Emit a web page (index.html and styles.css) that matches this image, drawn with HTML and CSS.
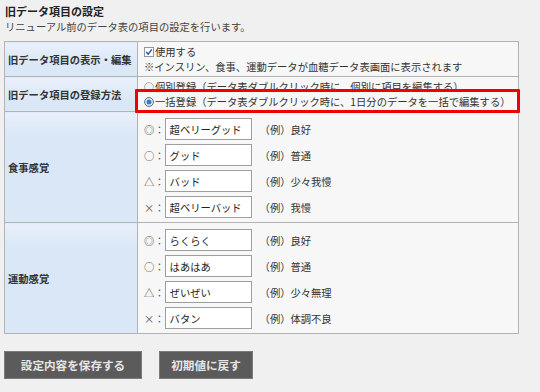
FILE: index.html
```html
<!DOCTYPE html>
<html lang="ja">
<head>
<meta charset="utf-8">
<link rel="stylesheet" href="styles.css">
</head>
<body>
<div class="page">
  <h1 class="title">旧データ項目の設定</h1>
  <p class="lead">リニューアル前のデータ表の項目の設定を行います。</p>
  <table class="settings">
    <tr class="r1">
      <th>旧データ項目の表示・編集</th>
      <td>
        <div class="line"><svg class="chk" width="10" height="10" viewBox="0 0 10 10"><rect x="0.5" y="0.5" width="9" height="9" fill="#fff" stroke="#8c9ab0"/><path d="M2.2 5.0 L4.2 7.2 L7.9 2.4" fill="none" stroke="#2b4fa0" stroke-width="1.4"/></svg>使用する</div>
        <div class="line">※インスリン、食事、運動データが血糖データ表画面に表示されます</div>
      </td>
    </tr>
    <tr class="r2">
      <th>旧データ項目の登録方法</th>
      <td>
        <div class="rline"><svg class="rad" width="10" height="10" viewBox="0 0 10 10"><circle cx="5" cy="5" r="4.4" fill="#f4f4f4" stroke="#a8a8a8" stroke-width="0.9"/></svg>個別登録（データ表ダブルクリック時に、個別に項目を編集する）</div>
        <div class="rline marked"><svg class="rad" width="10" height="10" viewBox="0 0 10 10"><circle cx="5" cy="5" r="4.4" fill="#e9eef4" stroke="#4d5a6a" stroke-width="0.9"/><circle cx="5" cy="5" r="2.5" fill="#2f7fd0"/></svg>一括登録（データ表ダブルクリック時に、1日分のデータを一括で編集する）</div>
      </td>
    </tr>
    <tr class="r3">
      <th>食事感覚</th>
      <td>
        <div class="opt"><span class="sym">◎：</span><input class="field" type="text" value="超ベリーグッド"><span class="ex">（例）良好</span></div>
        <div class="opt"><span class="sym">○：</span><input class="field" type="text" value="グッド"><span class="ex">（例）普通</span></div>
        <div class="opt"><span class="sym">△：</span><input class="field" type="text" value="バッド"><span class="ex">（例）少々我慢</span></div>
        <div class="opt"><span class="sym">×：</span><input class="field" type="text" value="超ベリーバッド"><span class="ex">（例）我慢</span></div>
      </td>
    </tr>
    <tr class="r4">
      <th>運動感覚</th>
      <td>
        <div class="opt"><span class="sym">◎：</span><input class="field" type="text" value="らくらく"><span class="ex">（例）良好</span></div>
        <div class="opt"><span class="sym">○：</span><input class="field" type="text" value="はあはあ"><span class="ex">（例）普通</span></div>
        <div class="opt"><span class="sym">△：</span><input class="field" type="text" value="ぜいぜい"><span class="ex">（例）少々無理</span></div>
        <div class="opt"><span class="sym">×：</span><input class="field" type="text" value="バタン"><span class="ex">（例）体調不良</span></div>
      </td>
    </tr>
  </table>
  <div class="actions">
    <button class="btn btn-save" type="button">設定内容を保存する</button>
    <button class="btn btn-reset" type="button">初期値に戻す</button>
  </div>
</div>
</body>
</html>
```

FILE: styles.css
```css
html, body {
  margin: 0;
  padding: 0;
  background: #f0f0f0;
}
body {
  font-family: "Noto Sans CJK JP", "Noto Sans", sans-serif;
  font-size: 10.3px;
  color: #333;
}
.page {
  padding: 3px 4px 0 4px;
}
.title {
  margin: 0 0 0 1px;
  font-size: 11px;
  line-height: 16px;
  font-weight: bold;
  color: #222;
}
.lead {
  margin: 0 0 0 1px;
  line-height: 15px;
  color: #444;
}
.settings {
  margin-top: 7px;
  width: 515px;
  border-collapse: collapse;
  border: 1px solid #a6a6a6;
}
.settings th,
.settings td {
  border: 1px solid #b3b3b3;
  vertical-align: middle;
}
.settings th {
  width: 124px;
  padding: 0 5px 0 3px;
  text-align: left;
  font-weight: bold;
  color: #333;
  white-space: nowrap;
  background: linear-gradient(#e8f0fa, #dae7f7 24px, #dae7f7);
}
.settings td {
  background: #f7f7f7;
  padding: 0 4px 0 6px;
}
.r1 td {
  padding-top: 2px;
  padding-bottom: 2px;
}
.line {
  display: flex;
  align-items: center;
  height: 15px;
  white-space: nowrap;
}
.chk {
  display: block;
  margin-right: 1px;
  flex: none;
}
.r2 td {
  padding-top: 2px;
  padding-bottom: 2px;
}
.rline {
  display: flex;
  align-items: center;
  height: 15px;
  white-space: nowrap;
  position: relative;
}
.rad {
  display: block;
  margin-right: 1px;
  flex: none;
}
.rline.marked::after {
  content: "";
  position: absolute;
  left: -9px;
  right: -6px;
  top: -5px;
  bottom: -4px;
  border: 3px solid #f00000;
  border-radius: 1px;
}
.r3 td,
.r4 td {
  padding-top: 6px;
  padding-bottom: 4px;
}
.opt {
  display: flex;
  align-items: center;
  height: 22px;
  margin-bottom: 4px;
}
.opt:last-child {
  margin-bottom: 0;
}
.sym {
  color: #555;
  white-space: nowrap;
}
.field {
  box-sizing: border-box;
  width: 87px;
  height: 22px;
  margin: 0;
  padding: 0 4px;
  border: 1px solid #9e9e9e;
  background: #fff;
  font-family: "Noto Sans CJK JP", "Noto Sans", sans-serif;
  font-size: 10.3px;
  color: #222;
  outline: none;
}
.ex {
  margin-left: 8px;
  white-space: nowrap;
}
.actions {
  display: flex;
  gap: 17px;
  margin-top: 17px;
}
.btn {
  box-sizing: border-box;
  height: 28px;
  margin: 0;
  padding: 0;
  border: 1px solid #7a7a7a;
  background: #5b5b5b;
  color: #e6e6e6;
  font-family: "Noto Sans CJK JP", "Noto Sans", sans-serif;
  font-size: 11.6px;
  font-weight: bold;
}
.btn-save {
  width: 138px;
}
.btn-reset {
  width: 94px;
}
```
